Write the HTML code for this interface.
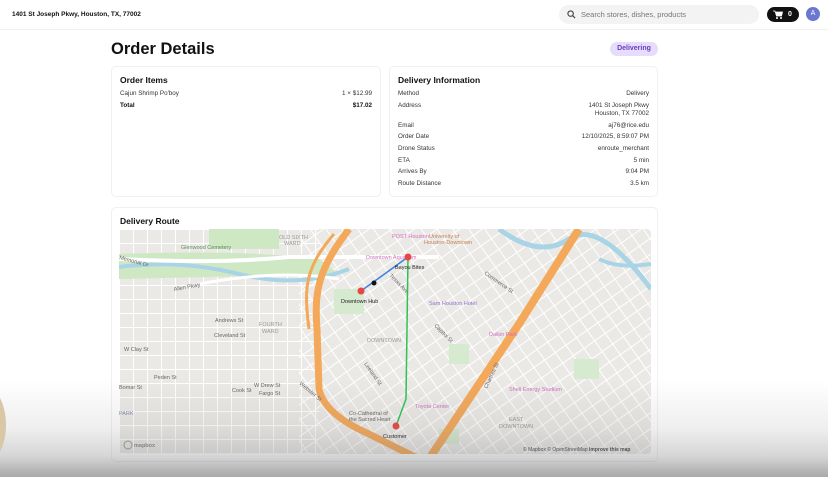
<!DOCTYPE html>
<html><head><meta charset="utf-8"><style>
*{box-sizing:border-box;margin:0;padding:0}
body{width:828px;height:477px;overflow:hidden;background:#fff;font-family:"Liberation Sans",sans-serif;color:#111;position:relative}
.hdr{position:absolute;left:0;top:0;width:828px;height:30px;border-bottom:1px solid #f0f0f0}
.addr{position:absolute;left:12px;top:11px;font-size:6.5px;font-weight:bold}
.search{position:absolute;left:559px;top:5px;width:200px;height:19px;background:#f3f3f3;border-radius:10px;font-size:7.5px;color:#777;padding:5px 0 0 22px}
.cart{position:absolute;left:767px;top:7px;width:32px;height:15px;background:#111;border-radius:8px;color:#fff;font-size:7px;font-weight:bold}
.av{position:absolute;left:806px;top:7px;width:14px;height:14px;border-radius:50%;background:#6c78d0;color:#fff;font-size:7px;text-align:center;line-height:14px}
h1{position:absolute;left:111px;top:40px;font-size:16.5px;font-weight:bold}
.badge{position:absolute;left:610px;top:42px;width:48px;height:14px;border-radius:7px;background:#e6dcfb;color:#6a3fc0;font-size:7px;font-weight:bold;text-align:center;line-height:14px}
.card{position:absolute;border:1px solid #f0f0f0;border-radius:5px;background:#fff}
.card h3{font-size:8.5px;font-weight:bold;position:absolute;left:8px;top:8px}
.row{position:absolute;left:8px;right:8px;font-size:6.3px;color:#333;display:flex;justify-content:space-between;line-height:8px}
.fade{position:absolute;left:0;top:380px;width:828px;height:97px;background:linear-gradient(rgba(120,120,120,0),rgba(120,120,120,.12) 50%,rgba(120,120,120,.3) 78%,rgba(110,110,110,.6))}
</style></head><body>
<div class="hdr">
<div class="addr">1401 St Joseph Pkwy, Houston, TX, 77002</div>
<div class="search"><svg style="position:absolute;left:8px;top:5px" width="9" height="9" viewBox="0 0 10 10"><circle cx="4" cy="4" r="3" fill="none" stroke="#444" stroke-width="1.2"/><path d="M6.3 6.3L9 9" stroke="#444" stroke-width="1.3"/></svg>Search stores, dishes, products</div>
<div class="cart"><svg style="position:absolute;left:6px;top:3px" width="10" height="9" viewBox="0 0 10 9"><path d="M0 1h2l1.5 5h5l1-4H3" fill="#fff" stroke="#fff" stroke-width=".8"/><circle cx="4" cy="8" r="1" fill="#fff"/><circle cx="8" cy="8" r="1" fill="#fff"/></svg><span style="position:absolute;left:21px;top:4px">0</span></div>
<div class="av">A</div>
</div>
<h1>Order Details</h1>
<div class="badge">Delivering</div>
<div class="card" style="left:111px;top:66px;width:270px;height:131px">
<h3>Order Items</h3>
<div class="row" style="top:23px"><span>Cajun Shrimp Po'boy</span><span>1 × $12.99</span></div>
<div class="row" style="top:35px;font-weight:bold;color:#111"><span>Total</span><span>$17.02</span></div>
</div>
<div class="card" style="left:389px;top:66px;width:269px;height:131px">
<h3>Delivery Information</h3>
<div class="row" style="top:23px"><span>Method</span><span>Delivery</span></div>
<div class="row" style="top:35px"><span>Address</span><span style="text-align:right">1401 St Joseph Pkwy<br>Houston, TX 77002</span></div>
<div class="row" style="top:55px"><span>Email</span><span>aj76@rice.edu</span></div>
<div class="row" style="top:66px"><span>Order Date</span><span>12/10/2025, 8:59:07 PM</span></div>
<div class="row" style="top:78px"><span>Drone Status</span><span>enroute_merchant</span></div>
<div class="row" style="top:90px"><span>ETA</span><span>5 min</span></div>
<div class="row" style="top:101px"><span>Arrives By</span><span>9:04 PM</span></div>
<div class="row" style="top:113px"><span>Route Distance</span><span>3.5 km</span></div>
</div>
<div class="card" style="left:111px;top:207px;width:547px;height:255px">
<h3>Delivery Route</h3>
</div>
<svg style="position:absolute;left:119px;top:229px;border-radius:4px" width="532" height="225" viewBox="0 0 532 225" font-family="Liberation Sans" font-size="5.5">
<defs>
<pattern id="g1" width="14" height="14" patternUnits="userSpaceOnUse"><path d="M0 0H14M0 0V14" stroke="#fff" stroke-width="2"/></pattern>
<pattern id="g2" width="13" height="13" patternUnits="userSpaceOnUse" patternTransform="rotate(-35)"><path d="M0 0H13M0 0V13" stroke="#fff" stroke-width="2"/></pattern>
<clipPath id="c"><rect width="532" height="225" rx="4"/></clipPath>
</defs>
<g clip-path="url(#c)">
<rect width="532" height="225" fill="#ebe9e6"/>
<rect width="200" height="225" fill="url(#g1)"/>
<rect x="180" width="352" height="225" fill="url(#g2)"/>
<path d="M0 25 Q120 20 200 30 L220 45 L0 50Z" fill="#cfe8c4"/>
<path d="M90 0h70v20H90z" fill="#cfe8c4"/>
<path d="M0 38 Q60 30 120 45 T230 40" stroke="#a9d4e6" stroke-width="4" fill="none"/>
<path d="M0 30 Q100 35 170 28 L320 28" stroke="#fff" stroke-width="4" fill="none"/>
<path d="M80 55 Q160 40 220 50" stroke="#fff" stroke-width="3" fill="none"/>
<path d="M380 0 Q420 30 450 10 T532 60" stroke="#a9d4e6" stroke-width="5" fill="none"/>
<path d="M480 30 Q500 40 532 35" stroke="#a9d4e6" stroke-width="4" fill="none"/>
<rect x="320" y="200" width="20" height="15" fill="#d6ead0"/>
<rect x="455" y="130" width="25" height="20" fill="#d6ead0"/>
<rect x="330" y="115" width="20" height="20" fill="#d6ead0"/>
<rect x="215" y="60" width="30" height="25" fill="#d6ead0"/>
<path d="M230 0 C200 40 195 60 198 100 L200 160 Q205 185 250 205 L300 230" stroke="#f3a85a" stroke-width="7" fill="none"/>
<path d="M460 0 L400 95 L310 230" stroke="#f3a85a" stroke-width="8" fill="none"/>
<path d="M215 5 C185 40 185 60 190 100" stroke="#f3a85a" stroke-width="3" fill="none"/>
<text x="160" y="10" fill="#999">OLD SIXTH</text><text x="165" y="16" fill="#999">WARD</text>
<text x="62" y="20" fill="#5a8a5a">Glenwood Cemetery</text>
<text x="0" y="30" fill="#666" transform="rotate(15 0 30)">Memorial Dr</text>
<text x="55" y="62" fill="#666" transform="rotate(-10 55 62)">Allen Pkwy</text>
<text x="140" y="97" fill="#999">FOURTH</text><text x="143" y="104" fill="#999">WARD</text>
<text x="248" y="113" fill="#999">DOWNTOWN</text>
<text x="247" y="30" fill="#d070c0">Downtown Aquarium</text>
<text x="273" y="9" fill="#d070c0">POST Houston</text>
<text x="310" y="9" fill="#c08050">University of</text><text x="305" y="15" fill="#c08050">Houston-Downtown</text>
<text x="310" y="76" fill="#9070d0">Sam Houston Hotel</text>
<text x="370" y="107" fill="#d070c0">Daikin Park</text>
<text x="390" y="162" fill="#d070c0">Shell Energy Stadium</text>
<text x="296" y="179" fill="#d070c0">Toyota Center</text>
<text x="230" y="186" fill="#666">Co-Cathedral of</text><text x="230" y="192" fill="#666">the Sacred Heart</text>
<text x="390" y="192" fill="#999">EAST</text><text x="380" y="199" fill="#999">DOWNTOWN</text>
<text x="96" y="93" fill="#666">Andrews St</text><text x="95" y="108" fill="#666">Cleveland St</text>
<text x="5" y="122" fill="#666">W Clay St</text><text x="35" y="150" fill="#666">Peden St</text>
<text x="0" y="160" fill="#666">Bomar St</text><text x="135" y="158" fill="#666">W Drew St</text>
<text x="140" y="166" fill="#666">Fargo St</text><text x="113" y="163" fill="#666">Cook St</text>
<text x="0" y="186" fill="#8090b0">PARK</text>
<text x="365" y="45" fill="#666" transform="rotate(35 365 45)">Commerce St</text>
<text x="270" y="47" fill="#666" transform="rotate(45 270 47)">Texas Ave</text>
<text x="315" y="97" fill="#666" transform="rotate(45 315 97)">Capitol St</text>
<text x="368" y="160" fill="#666" transform="rotate(-65 368 160)">Chartres St</text>
<text x="245" y="135" fill="#666" transform="rotate(55 245 135)">Leeland St</text>
<text x="180" y="155" fill="#666" transform="rotate(40 180 155)">Webster St</text>
<path d="M289 28 L287 170 L277 197" stroke="#2ec254" stroke-width="1.5" fill="none"/>
<path d="M289 28 L242 62" stroke="#3b7fe0" stroke-width="1.5"/>
<circle cx="289" cy="28" r="3.5" fill="#e84545"/>
<circle cx="242" cy="62" r="3.5" fill="#e84545"/>
<circle cx="277" cy="197" r="3.5" fill="#e84545"/>
<circle cx="255" cy="54" r="2.5" fill="#111"/>
<text x="276" y="40" fill="#222">Bayou Bites</text>
<text x="222" y="74" fill="#222">Downtown Hub</text>
<text x="264" y="209" fill="#222">Customer</text>
<circle cx="9" cy="216" r="4" fill="none" stroke="#999"/><text x="15" y="218" fill="#888" font-weight="bold">mapbox</text>
<text x="404" y="222" fill="#444" font-size="5">© Mapbox © OpenStreetMap <tspan font-weight="bold">Improve this map</tspan></text>
</g>
</svg>
<div class="fade"></div>
<div style="position:absolute;left:-40px;top:385px;width:46px;height:80px;border-radius:50%;background:#d8c8a8"></div>
</body></html>
